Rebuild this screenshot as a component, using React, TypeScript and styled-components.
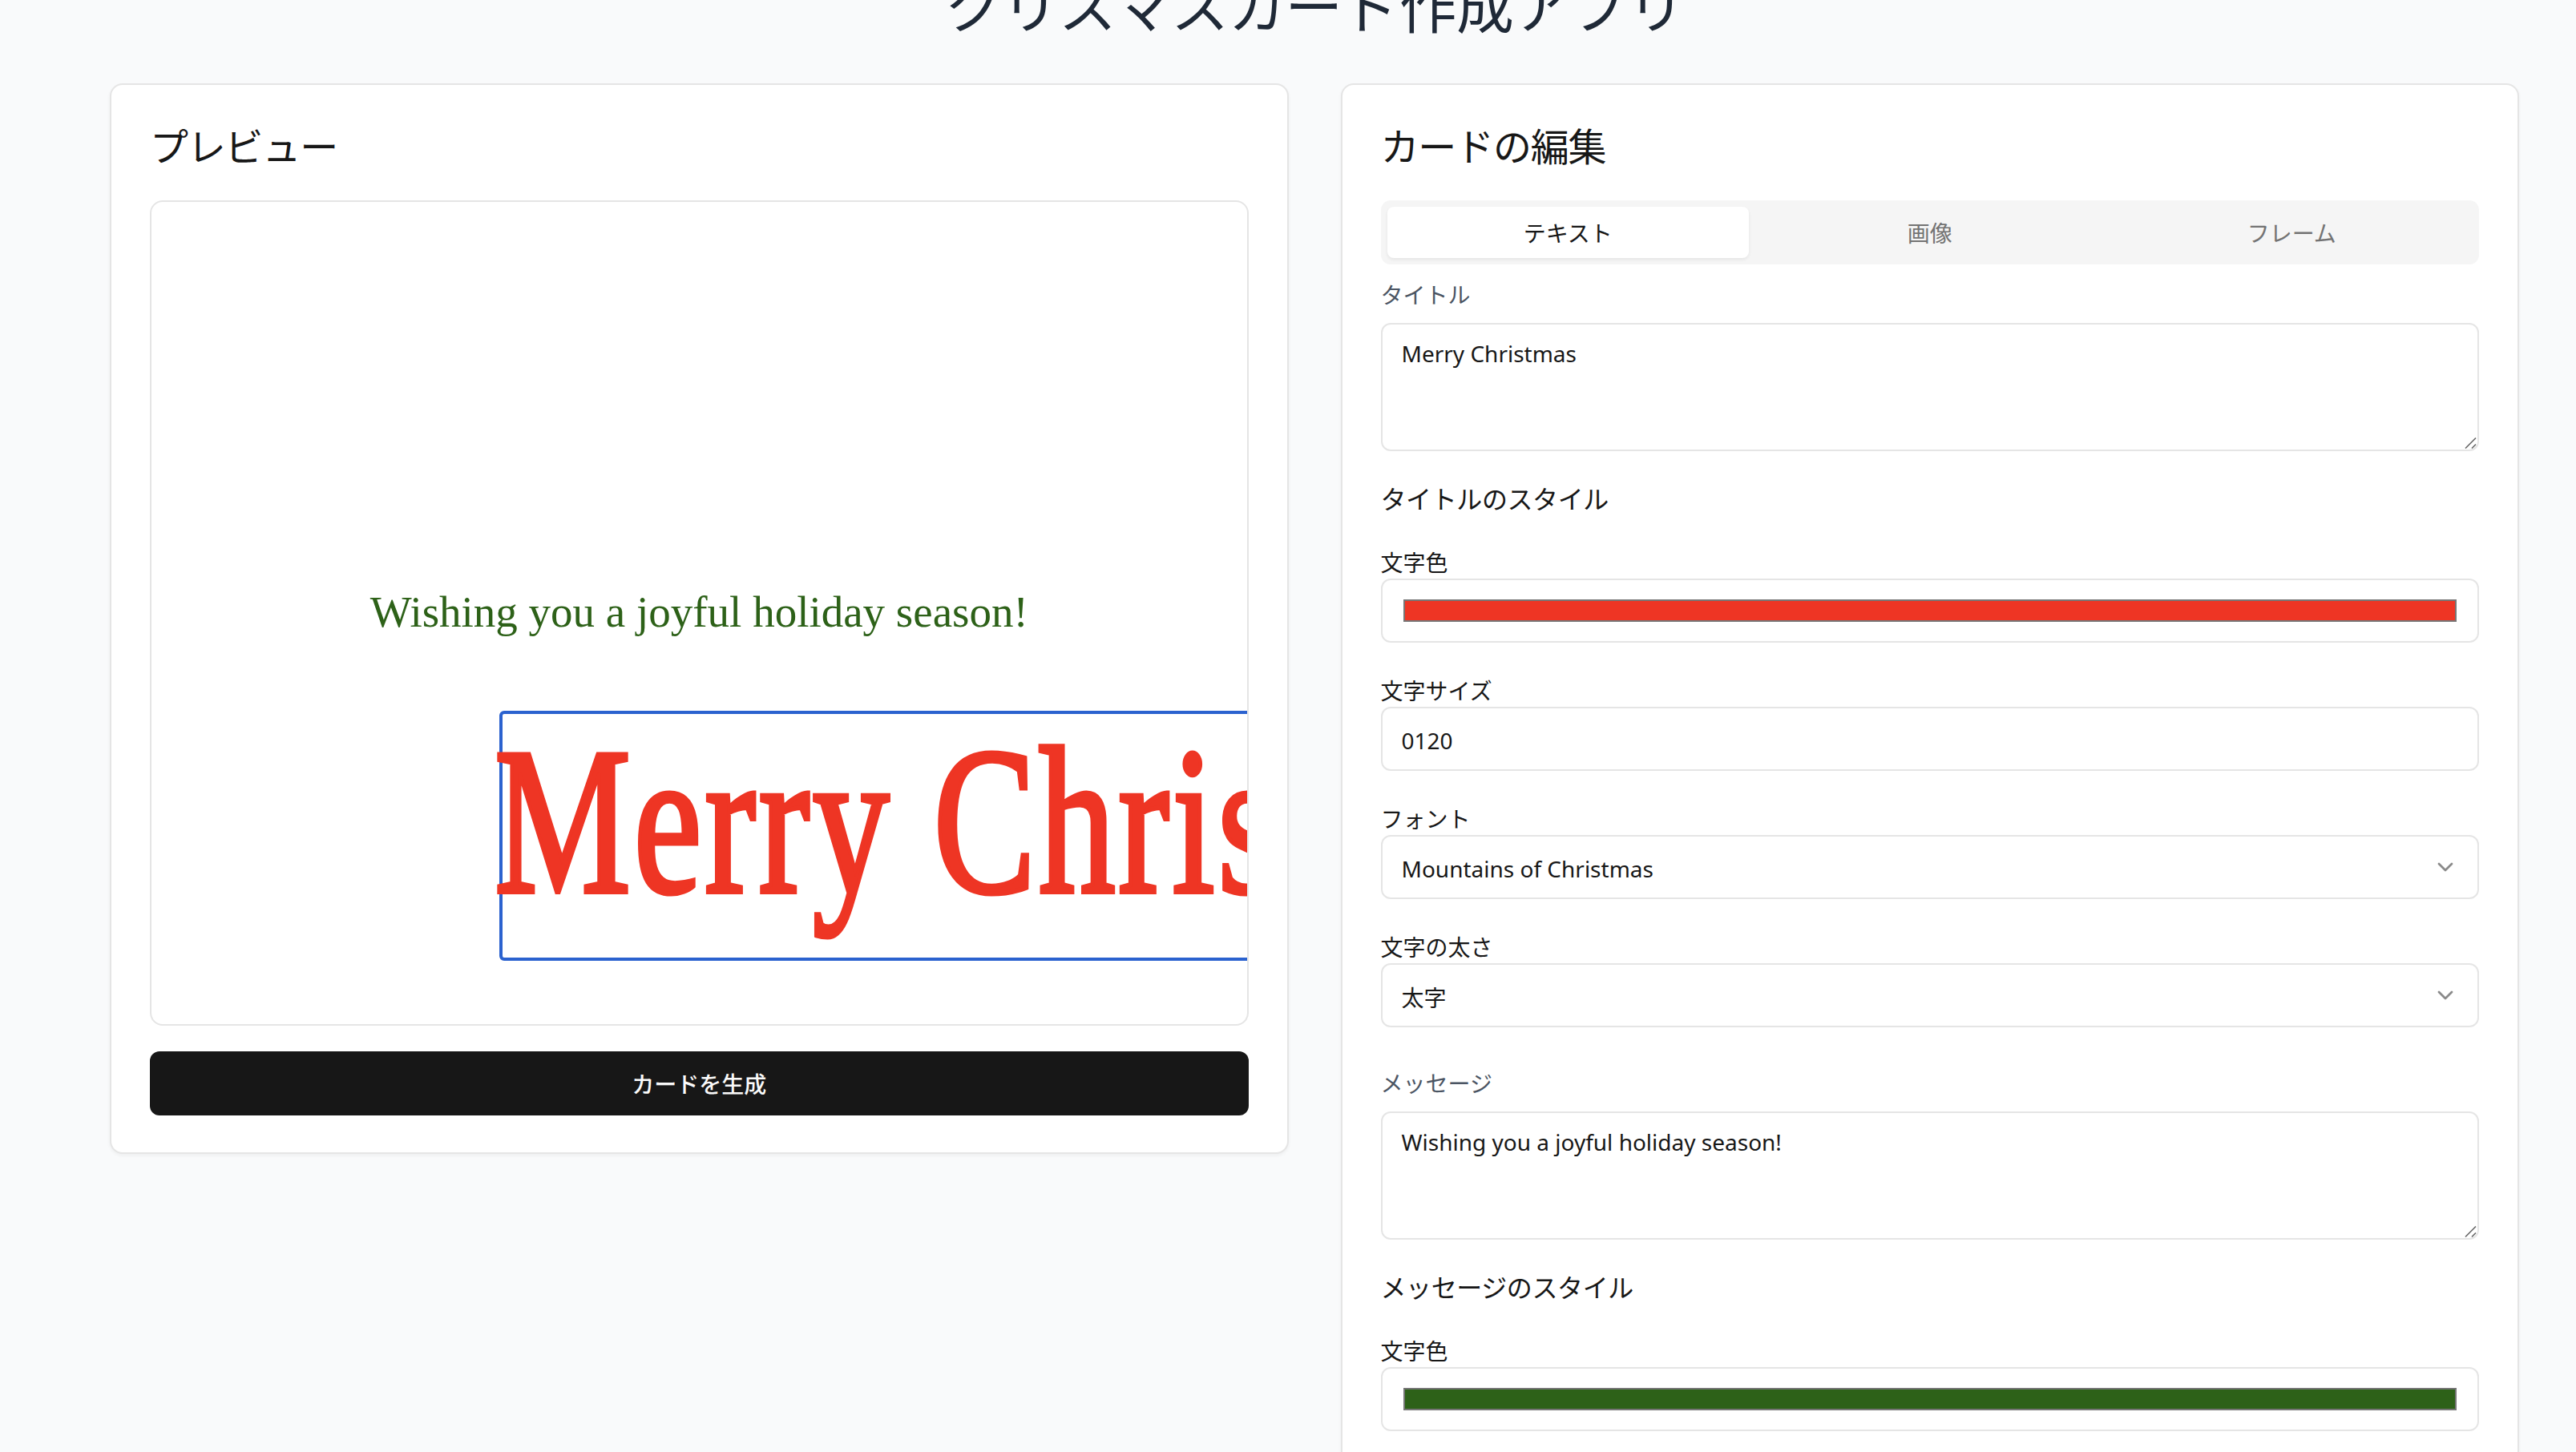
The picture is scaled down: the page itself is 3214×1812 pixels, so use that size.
import React from 'react';
import styled, { createGlobalStyle } from 'styled-components';
import { ChevronDown } from 'lucide-react';

const GlobalStyle = createGlobalStyle`
  html, body { margin: 0; padding: 0; height: 100%; overflow: hidden; background: #f9fafb; }
  body { font-family: "Noto Sans", "Noto Sans CJK JP", sans-serif; color: #171717; }
  * { box-sizing: border-box; }
`;

const Page = styled.main`
  width: 3006px;
  margin-left: 137px;
`;

const Title = styled.h1`
  margin: -36px 0 60px;
  font-size: 72px;
  line-height: 80px;
  font-weight: 400;
  letter-spacing: -0.8px;
  text-align: center;
  color: #1f2937;
  font-family: "Noto Sans CJK JP", sans-serif;
`;

const Columns = styled.div`
  display: grid;
  grid-template-columns: 1fr 1fr;
  gap: 65px;
  align-items: start;
`;

const Card = styled.section`
  background: #fff;
  border: 2px solid #e5e5e5;
  border-radius: 16px;
  padding: 48px 48px 46px;
  box-shadow: 0 2px 4px rgba(0, 0, 0, 0.05);
`;

const CardTitle = styled.h2`
  margin: 0 0 48px;
  font-size: 48px;
  line-height: 52px;
  height: 48px;
  font-weight: 400;
  letter-spacing: -1.2px;
  color: #171717;
  font-family: "Noto Sans CJK JP", sans-serif;
`;

const Preview = styled.div`
  position: relative;
  height: 1030px;
  background: #fff;
  border: 2px solid #e5e5e5;
  border-radius: 16px;
  overflow: hidden;
`;

const PreviewMessage = styled.div`
  position: absolute;
  left: 0;
  right: 0;
  top: 480px;
  text-align: center;
  font-family: "Liberation Serif", serif;
  font-size: 55px;
  line-height: 64px;
  color: #2d6118;
  white-space: nowrap;
`;

const TitleBox = styled.div`
  position: absolute;
  left: 434px;
  top: 635px;
  width: 1100px;
  height: 312px;
  border: 4px solid #2b62cf;
  border-radius: 6px;
`;

const PreviewTitle = styled.span`
  position: absolute;
  left: -10px;
  top: -26px;
  font-family: "Liberation Serif", serif;
  font-weight: 400;
  font-size: 262px;
  line-height: 320px;
  letter-spacing: 5px;
  color: #ee3524;
  -webkit-text-stroke: 6px #ee3524;
  white-space: nowrap;
  transform: scaleX(0.73);
  transform-origin: left center;
`;

const PrimaryButton = styled.button`
  display: block;
  width: 100%;
  height: 80px;
  margin-top: 32px;
  border: 0;
  border-radius: 12px;
  background: #171717;
  color: #fafafa;
  font-size: 28px;
  font-weight: 500;
  font-family: "Noto Sans CJK JP", sans-serif;
`;

const Tabs = styled.div`
  display: grid;
  grid-template-columns: repeat(3, 1fr);
  height: 80px;
  padding: 8px;
  background: #f5f5f5;
  border-radius: 12px;
`;

const Tab = styled.button<{ $active?: boolean }>`
  border: 0;
  border-radius: 8px;
  font-size: 28px;
  font-family: "Noto Sans CJK JP", sans-serif;
  background: ${(p) => (p.$active ? '#fff' : 'transparent')};
  color: ${(p) => (p.$active ? '#171717' : '#737373')};
  box-shadow: ${(p) => (p.$active ? '0 2px 4px rgba(0,0,0,0.07)' : 'none')};
`;

const Group = styled.div<{ $top: number }>`
  margin-top: ${(p) => p.$top}px;
`;

const FieldLabel = styled.label<{ $muted?: boolean }>`
  display: block;
  height: ${(p) => (p.$muted ? 40 : 41)}px;
  font-size: 28px;
  line-height: 40px;
  font-family: "Noto Sans CJK JP", sans-serif;
  color: ${(p) => (p.$muted ? '#4b5563' : '#171717')};
`;

const AreaWrap = styled.div`
  position: relative;
  height: 160px;
  margin-top: 16px;
`;

const TextArea = styled.textarea`
  display: block;
  width: 100%;
  height: 100%;
  padding: 16px 24px;
  border: 2px solid #e5e5e5;
  border-radius: 12px;
  background: #fff;
  color: #171717;
  font-family: "Noto Sans", "Noto Sans CJK JP", sans-serif;
  font-size: 28px;
  line-height: 40px;
  outline: none;
  resize: none;
`;

const Grip = styled.svg`
  position: absolute;
  right: 2px;
  bottom: 2px;
  width: 16px;
  height: 16px;
  pointer-events: none;
`;

const SectionTitle = styled.h3`
  margin: 34px 0 36px;
  font-size: 32px;
  line-height: 48px;
  font-weight: 400;
  letter-spacing: -0.4px;
  color: #171717;
  font-family: "Noto Sans CJK JP", sans-serif;
`;

const Field = styled.div`
  margin-bottom: 39px;
`;

const Control = styled.div`
  display: flex;
  align-items: center;
  justify-content: space-between;
  height: 80px;
  padding: 0 24px;
  border: 2px solid #e5e5e5;
  border-radius: 12px;
  background: #fff;
  font-size: 28px;
  color: #171717;
`;

const ColorControl = styled(Control)`
  padding: 0 26px;
`;

const Swatch = styled.div<{ $color: string }>`
  flex: 1;
  height: 28px;
  background: ${(p) => p.$color};
  border: 2px solid #767676;
`;

const ControlText = styled.span`
  position: relative;
  top: 2px;
  font-family: "Noto Sans", "Noto Sans CJK JP", sans-serif;
`;

const Chevron = styled(ChevronDown)`
  color: #171717;
  opacity: 0.5;
`;

const ColorField = ({ color }: { color: string }) => (
  <Field>
    <FieldLabel>文字色</FieldLabel>
    <ColorControl>
      <Swatch $color={color} />
    </ColorControl>
  </Field>
);

const TextField = ({ label, value, select }: { label: string; value: string; select?: boolean }) => (
  <Field>
    <FieldLabel>{label}</FieldLabel>
    <Control>
      <ControlText>{value}</ControlText>
      {select && <Chevron size={32} />}
    </Control>
  </Field>
);

const ResizableArea = ({ value }: { value: string }) => (
  <AreaWrap>
    <TextArea defaultValue={value} />
    <Grip viewBox="0 0 16 16" fill="none" stroke="#666" strokeWidth="1.6">
      <path d="M1 14.5 14 1.5M9 14.5 14 9.5" />
    </Grip>
  </AreaWrap>
);

export default function App() {
  return (
    <>
      <GlobalStyle />
      <Page>
        <Title>クリスマスカード作成アプリ</Title>
        <Columns>
          <Card>
            <CardTitle>プレビュー</CardTitle>
            <Preview>
              <PreviewMessage>Wishing you a joyful holiday season!</PreviewMessage>
              <TitleBox>
                <PreviewTitle>Merry Christmas</PreviewTitle>
              </TitleBox>
            </Preview>
            <PrimaryButton>カードを生成</PrimaryButton>
          </Card>
          <Card>
            <CardTitle>カードの編集</CardTitle>
            <Tabs>
              <Tab $active>テキスト</Tab>
              <Tab>画像</Tab>
              <Tab>フレーム</Tab>
            </Tabs>
            <Group $top={17}>
              <FieldLabel $muted>タイトル</FieldLabel>
              <ResizableArea value="Merry Christmas" />
              <SectionTitle>タイトルのスタイル</SectionTitle>
              <ColorField color="#ee3524" />
              <TextField label="文字サイズ" value="0120" />
              <TextField label="フォント" value="Mountains of Christmas" select />
              <TextField label="文字の太さ" value="太字" select />
            </Group>
            <Group $top={49}>
              <FieldLabel $muted>メッセージ</FieldLabel>
              <ResizableArea value="Wishing you a joyful holiday season!" />
              <SectionTitle>メッセージのスタイル</SectionTitle>
              <ColorField color="#2d6118" />
            </Group>
          </Card>
        </Columns>
      </Page>
    </>
  );
}
